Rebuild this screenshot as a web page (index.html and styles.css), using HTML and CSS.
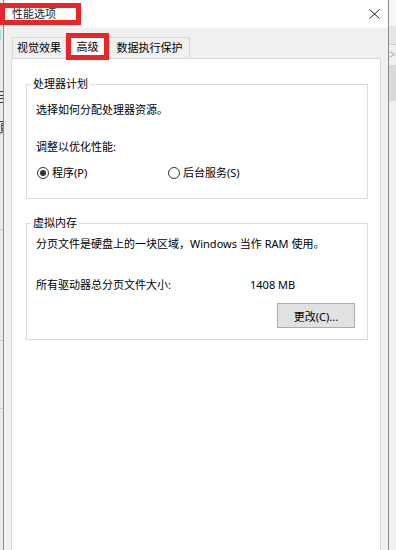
FILE: index.html
```html
<!DOCTYPE html>
<html lang="zh-CN">
<head>
    <meta charset="UTF-8">
    <meta name="viewport" content="width=device-width, initial-scale=1.0">
    <title>性能选项</title>
    <link rel="stylesheet" href="styles.css">
</head>
<body>
    <div class="screen">
        <!-- Window behind the dialog, only a sliver shows -->
        <div class="back-left">
            <div class="frag frag-a">1</div>
            <div class="frag frag-b">目</div>
            <div class="frag frag-c">頂</div>
            <div class="rule rule-a"></div>
            <div class="rule rule-b"></div>
            <div class="rule rule-c"></div>
        </div>

        <div class="dialog">
            <div class="titlebar">
                <span class="title">性能选项</span>
                <svg class="close" width="11" height="10" viewBox="0 0 11 10">
                    <path d="M0.5 0.5 L10.5 9.5 M10.5 0.5 L0.5 9.5" stroke="#222" stroke-width="1" fill="none"/>
                </svg>
            </div>

            <div class="dialog-body">
                <div class="tabs">
                    <div class="tab tab-1">视觉效果</div>
                    <div class="tab tab-2 tab-active">高级</div>
                    <div class="tab tab-3">数据执行保护</div>
                </div>

                <div class="panel">
                    <!-- Processor scheduling -->
                    <fieldset class="group group-cpu">
                        <legend>处理器计划</legend>
                        <p class="note">选择如何分配处理器资源。</p>
                        <p class="label">调整以优化性能:</p>
                        <div class="radios">
                            <label class="radio radio-first"><span class="dot dot-on"></span>程序(P)</label>
                            <label class="radio"><span class="dot"></span>后台服务(S)</label>
                        </div>
                    </fieldset>

                    <!-- Virtual memory -->
                    <fieldset class="group group-mem">
                        <legend>虚拟内存</legend>
                        <p class="note">分页文件是硬盘上的一块区域，Windows 当作 RAM 使用。</p>
                        <div class="size-row">
                            <span class="size-label">所有驱动器总分页文件大小:</span>
                            <span class="size-value">1408 MB</span>
                        </div>
                        <div class="actions">
                            <button class="btn">更改(C)...</button>
                        </div>
                    </fieldset>
                </div>
            </div>
        </div>

        <div class="back-right">
            <div class="strip strip-top"></div>
            <div class="strip strip-band"></div>
            <div class="strip strip-arrow">&gt;</div>
            <div class="strip strip-block"></div>
        </div>
    </div>
</body>
</html>
```

FILE: styles.css
```css
/* Page and base font */
html, body {
    margin: 0;
    padding: 0;
}
body {
    width: 396px;
    height: 550px;
    overflow: hidden;
    background: #f0f0f0;
    font-family: "Noto Sans", "Noto Sans CJK SC", sans-serif;
    font-size: 11px;
    line-height: 14px;
    color: #000;
}
.screen {
    display: flex;
    height: 550px;
}

/* Background window on the left */
.back-left {
    width: 3px;
    margin-right: 1px;
    border-right: 1px solid #8d8d8d;
    background: #e9e9e9;
    overflow: hidden;
    display: flex;
    flex-direction: column;
}
.frag {
    font-size: 14px;
    line-height: 14px;
    margin-left: -5px;
    color: #333;
}
.frag-a { margin-top: 28px; }
.frag-b { margin-top: 48px; }
.frag-c { margin-top: 16px; }
.rule {
    height: 1px;
    background: #c8c8c8;
}
.rule-a { margin-top: 95px; }
.rule-b { margin-top: 110px; }
.rule-c { margin-top: 67px; }

/* Dialog frame */
.dialog {
    width: 383px;
    border-right: 1px solid #8a8a8a;
    display: flex;
    flex-direction: column;
    background: #f0f0f0;
}
.titlebar {
    height: 28px;
    background: #fff;
    display: flex;
    align-items: center;
    justify-content: space-between;
    position: relative;
}
.title {
    padding-left: 7px;
    color: #222;
}
/* Red annotation box over the title */
.titlebar::after {
    content: "";
    position: absolute;
    left: -5px;
    top: 3px;
    width: 71px;
    height: 12px;
    border: 5px solid #e8262a;
}
.close {
    margin-right: 8px;
}

.dialog-body {
    flex: 1;
    display: flex;
    flex-direction: column;
    padding: 7px 7px 0 6px;
}

/* Tab strip */
.tabs {
    display: flex;
    align-items: flex-end;
    height: 23px;
    padding-left: 1px;
    position: relative;
    z-index: 1;
}
.tab {
    box-sizing: border-box;
    height: 21px;
    line-height: 20px;
    text-align: center;
    border: 1px solid #d9d9d9;
    border-bottom: none;
    background: #f0f0f0;
}
.tab-1 { width: 54px; }
.tab-2 { width: 45px; margin-left: -1px; }
.tab-3 { width: 81px; margin-left: -1px; }
.tab-active {
    height: 24px;
    margin-bottom: -1px;
    line-height: 22px;
    background: #fff;
    position: relative;
}
/* Red annotation box over the active tab */
.tab-active::after {
    content: "";
    position: absolute;
    left: 0;
    top: -3px;
    right: 0;
    bottom: -1px;
    border: 5px solid #e8262a;
}

/* Tab page */
.panel {
    flex: 1;
    background: #fff;
    border: 1px solid #d9d9d9;
    border-bottom: none;
    padding: 0 12px 0 14px;
}
.group {
    margin: 0;
    padding: 0 9px;
    border: 1px solid #dcdcdc;
    min-width: 0;
}
.group legend {
    padding: 0 2px;
    margin-left: -5px;
}
.group p {
    margin: 0;
}
.group-cpu {
    margin-top: 18px;
    padding-bottom: 18px;
}
.group-cpu .note { margin-top: 12px; }
.group-cpu .label { margin-top: 23px; }
.radios {
    display: flex;
    margin-top: 12px;
    margin-left: 1px;
}
.radio {
    display: flex;
    align-items: center;
}
.radio-first {
    width: 131px;
}
.dot {
    box-sizing: border-box;
    width: 12px;
    height: 12px;
    border: 1px solid #333;
    border-radius: 50%;
    margin-right: 3px;
    display: flex;
    align-items: center;
    justify-content: center;
}
.dot-on::after {
    content: "";
    width: 6px;
    height: 6px;
    border-radius: 50%;
    background: #333;
}

.group-mem {
    margin-top: 17px;
    padding-bottom: 11px;
}
.group-mem .note { margin-top: 7px; }
.size-row {
    display: flex;
    margin-top: 27px;
}
.size-label {
    width: 214px;
}
.actions {
    display: flex;
    justify-content: flex-end;
    margin-top: 11px;
    padding-right: 3px;
}
.btn {
    width: 78px;
    height: 25px;
    padding: 0;
    background: #e1e1e1;
    border: 1px solid #adadad;
    font-family: inherit;
    font-size: 11px;
    color: #000;
}

/* Background window on the right */
.back-right {
    flex: 1;
    background: #f0f0f0;
    display: flex;
    flex-direction: column;
}
.strip-top {
    height: 26px;
    background: #f6f6f6;
}
.strip-band {
    height: 18px;
    background: #e6e6e6;
    border-bottom: 1px solid #cfcfcf;
}
.strip-arrow {
    height: 20px;
    line-height: 20px;
    color: #aaa;
    font-size: 12px;
}
.strip-block {
    height: 36px;
    background: #dadada;
}
```
